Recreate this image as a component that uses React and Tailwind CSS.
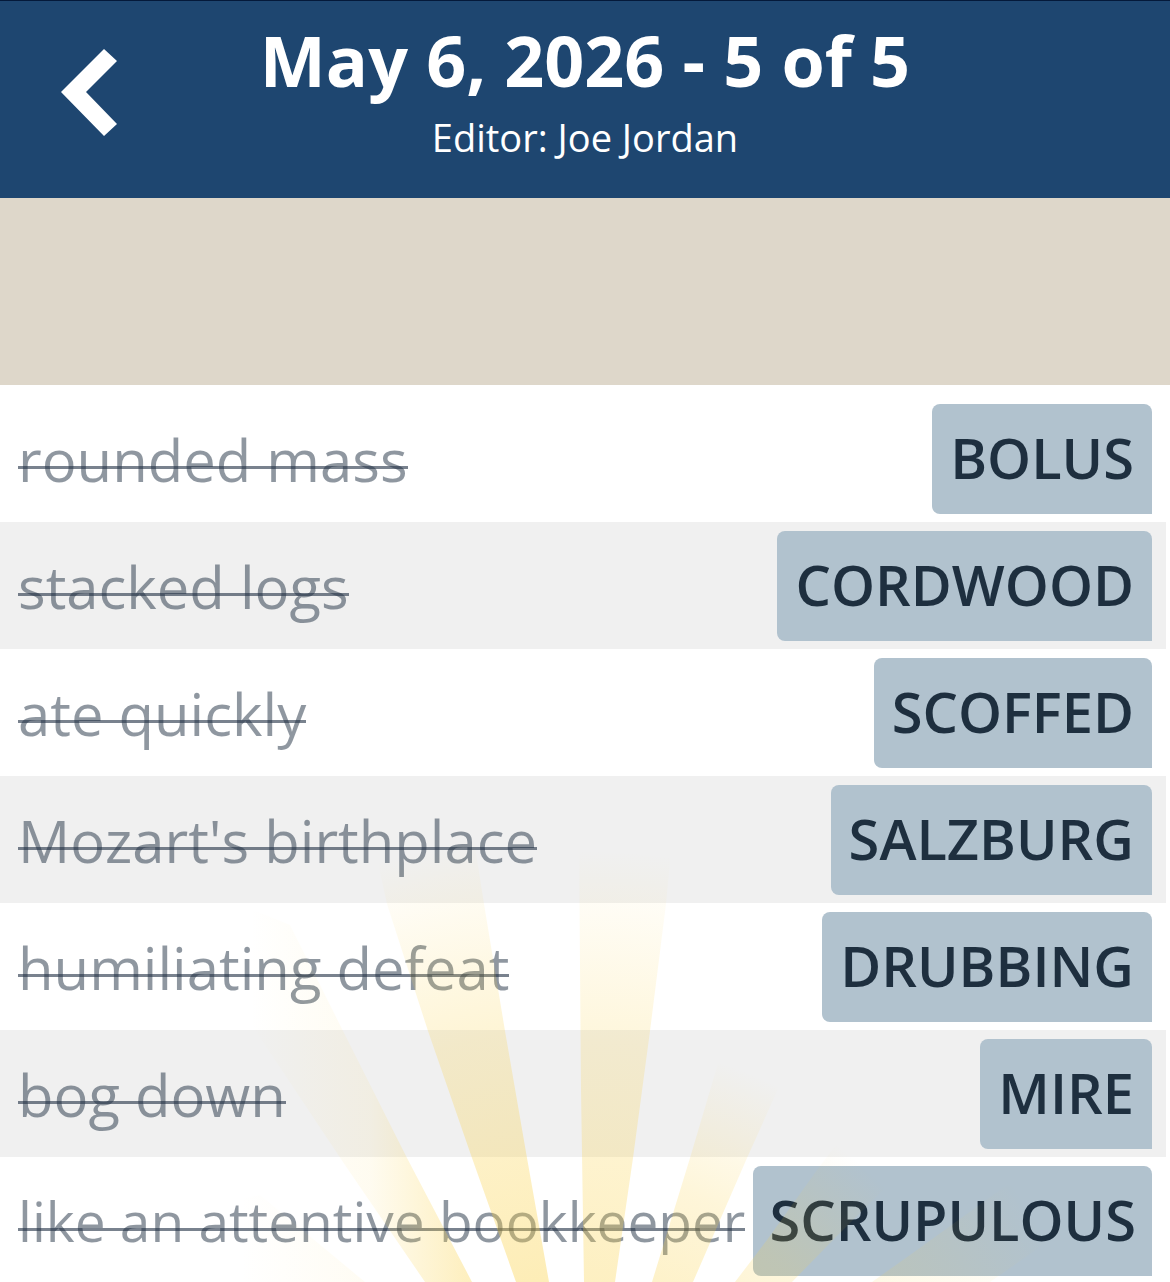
const clues = [
  { clue: "rounded mass", answer: "BOLUS" },
  { clue: "stacked logs", answer: "CORDWOOD" },
  { clue: "ate quickly", answer: "SCOFFED" },
  { clue: "Mozart's birthplace", answer: "SALZBURG" },
  { clue: "humiliating defeat", answer: "DRUBBING" },
  { clue: "bog down", answer: "MIRE" },
  { clue: "like an attentive bookkeeper", answer: "SCRUPULOUS" },
];

// every ray fans out from a sun below the bottom edge
const SUN = { x: 581, y: 1490 };

const rays = [
  { id: "c", reach: 660, opacity: 1, points: "525,1310 516,1282 472,1158 428,1031 387,904 373,840 474,840 484,904 505,1031 527,1158 549,1282 554,1310" },
  { id: "d", reach: 640, opacity: 0.85, points: "584,1310 584,1282 581,1090 579,840 672,840 666,904 650,1031 633,1158 615,1282 611,1310" },
  { id: "e", reach: 450, opacity: 0.9, points: "643,1310 652,1282 690,1158 725,1040 800,1040 747,1158 693,1282 681,1310" },
  { id: "f", reach: 430, opacity: 0.8, points: "714,1310 735,1282 767,1240 817,1170 870,1100 960,1110 893,1180 833,1240 792,1282 766,1310" },
  { id: "g", reach: 530, opacity: 0.55, points: "835,1310 872,1282 917,1250 1000,1190 1060,1150 1150,1170 1050,1240 990,1282 950,1310" },
];

// the two rays on the left fade sideways instead of outwards
const sideRays = [
  { id: "a", from: 240, to: 560, opacity: 1, points: "365,1282 260,1195 130,1220 240,1310 300,1310" },
  { id: "b", from: 250, to: 490, opacity: 1, points: "485,1310 472,1282 407,1158 343,1031 290,925 180,880 235,1000 345,1165 425,1282 440,1310" },
];

const SunRays = () => (
  <svg
    viewBox="0 840 1170 442"
    className="absolute bottom-0 left-0 w-full pointer-events-none"
    aria-hidden="true"
  >
    <defs>
      {rays.map((ray) => (
        <radialGradient
          key={ray.id}
          id={`ray-${ray.id}`}
          gradientUnits="userSpaceOnUse"
          cx={SUN.x}
          cy={SUN.y}
          r={ray.reach}
        >
          <stop offset="0.3" stopColor="#fad146" stopOpacity="0.4" />
          <stop offset="0.7" stopColor="#fad146" stopOpacity="0.23" />
          <stop offset="1" stopColor="#fad146" stopOpacity="0" />
        </radialGradient>
      ))}
      {sideRays.map((ray) => (
        <linearGradient
          key={ray.id}
          id={`ray-${ray.id}`}
          gradientUnits="userSpaceOnUse"
          x1={ray.from}
          x2={ray.to}
          y1="0"
          y2="0"
        >
          <stop offset="0" stopColor="#fad146" stopOpacity="0" />
          <stop offset="0.5" stopColor="#fad146" stopOpacity="0.08" />
          <stop offset="0.9" stopColor="#fad146" stopOpacity="0.34" />
        </linearGradient>
      ))}
    </defs>
    {[...sideRays, ...rays].map((ray) => (
      <polygon
        key={ray.id}
        points={ray.points}
        fill={`url(#ray-${ray.id})`}
        opacity={ray.opacity}
      />
    ))}
  </svg>
);

const Header = () => (
  <header className="flex items-start h-[198px] bg-[#1e4670] border-t border-[#04193a] text-white">
    <button aria-label="Back" className="w-[178px] h-full flex items-center justify-center pb-4">
      <svg viewBox="0 0 56 88" className="w-14 h-[88px]" fill="currentColor">
        <polygon points="0,44 43,1 56,13 25,44 56,76 43,88" />
      </svg>
    </button>
    <div className="flex-1 text-center pt-5">
      <h1 className="text-[70px] leading-[78px] font-bold">May 6, 2026 - 5 of 5</h1>
      <p className="text-[38px] leading-[76px]">Editor: Joe Jordan</p>
    </div>
    <div className="w-[178px]" />
  </header>
);

const ClueRow = ({ clue, answer }) => {
  const isLong = clue.length > 20;

  return (
    <li className="flex items-center justify-between h-[127px] mr-1 pl-[18px] pr-[14px] pt-px odd:bg-white even:bg-[#f0f0f0]">
      {/* the line of a solved clue sits lower than the default line-through */}
      <s
        className={`${
          isLong ? "text-[55px]" : "text-[58px]"
        } relative whitespace-nowrap text-[#1f2f42]/50 no-underline after:absolute after:inset-x-0 after:top-[58%] after:h-[3px] after:bg-[#1f2f42]/60`}
      >
        {clue}
      </s>
      <span
        className={`${
          isLong ? "px-4" : "px-[18px]"
        } h-[110px] leading-[106px] rounded-lg rounded-br-none bg-[#b1c2ce] text-[56px] font-semibold text-[#1e2f3f]`}
      >
        {answer}
      </span>
    </li>
  );
};

export default function App() {
  return (
    <div className="relative h-screen overflow-hidden bg-white font-['Open_Sans',sans-serif]">
      <Header />
      <div className="h-[187px] bg-[#ded7ca]" />
      <ul className="pt-[10px]">
        {clues.map((item) => (
          <ClueRow key={item.answer} clue={item.clue} answer={item.answer} />
        ))}
      </ul>
      <SunRays />
    </div>
  );
}
